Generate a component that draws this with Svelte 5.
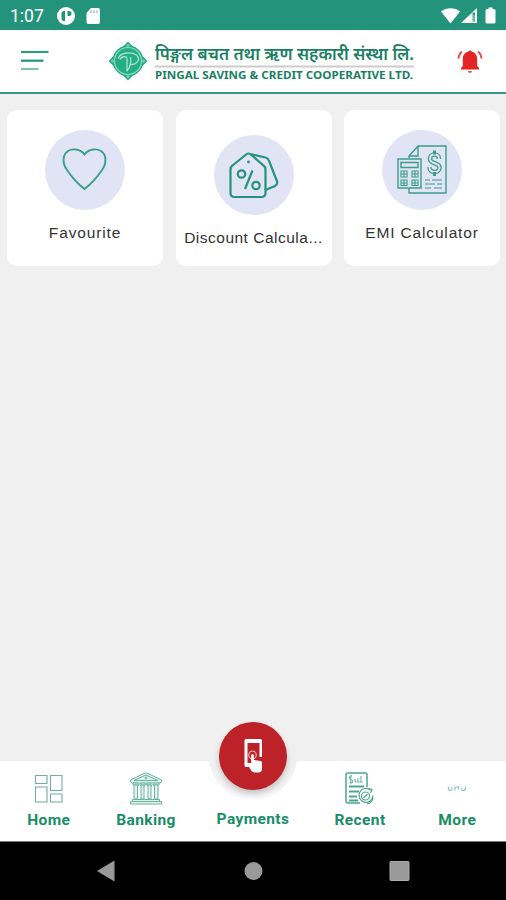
<script>
    const services = [
        { id: 'heart', label: 'Favourite' },
        { id: 'discount', label: 'Discount Calcula...' },
        { id: 'emi', label: 'EMI Calculator' }
    ];

    const tabs = [
        { id: 'home', label: 'Home' },
        { id: 'banking', label: 'Banking' },
        { id: 'payments', label: 'Payments' },
        { id: 'recent', label: 'Recent' },
        { id: 'more', label: 'More' }
    ];
</script>

<div class="screen">
    <div class="status">
        <span class="time">1:07</span>
        <svg class="notif" width="46" height="20" viewBox="0 0 46 20">
            <circle cx="9" cy="10" r="9" fill="#fff" />
            <path d="M8 5v10H7a2.500 2.500 0 0 1-2.500-2.500v-5A2.500 2.500 0 0 1 7 5zM10.500 5H12a2.500 2.500 0 0 1 2.500 2.500A2.500 2.500 0 0 1 12 10h-1.500z" fill="#24937b" />
            <path d="M34 2h7a2 2 0 0 1 2 2v12a2 2 0 0 1-2 2H31.500a2 2 0 0 1-2-2V7z" fill="#fff" />
            <path d="M34 4.500v2.500M37 4.500v2.500M40 4.500v2.500" stroke="#7dbfae" stroke-width="1.300" />
        </svg>
        <svg class="signal" width="60" height="20" viewBox="0 0 60 20">
            <path d="M1 5.500C6 1.200 15 1.200 20 5.500L10.500 17.500z" fill="#fff" />
            <path d="M37 2v15H21z" fill="#fff" />
            <path d="M33.800 6.500v9" stroke="#24937b" stroke-width="2.400" />
            <path d="M34 9v6" stroke="#b5dbd1" stroke-width="1" />
            <path d="M48.500 1.500h4v1.500h1.500a1.500 1.500 0 0 1 1.500 1.500v11.500a1.500 1.500 0 0 1-1.500 1.500h-7a1.500 1.500 0 0 1-1.500-1.500V4.500A1.500 1.500 0 0 1 47 3h1.500z" fill="#fff" />
        </svg>
    </div>

    <header>
        <svg class="menu" width="28" height="22" viewBox="0 0 28 22" fill="none" stroke-width="2.200">
            <path d="M0 2h27.500" stroke="#36987f" />
            <path d="M0 10.700h22.500" stroke="#24937b" />
            <path d="M0 19h17.500" stroke="#86bfae" />
        </svg>
        <div class="brand">
            <svg class="logo" width="40" height="40" viewBox="0 0 40 40">
                <path d="M20 0.500L24.500 5Q32 7.500 35 15.500L39.500 20L35 24.500Q32 32 24.500 35L20 39.500L15.500 35Q8 32 5 24.500L0.500 20L5 15.500Q8 7.500 15.500 5z" fill="#25ad83" />
                <circle cx="20" cy="20" r="13.500" fill="none" stroke="#8dd9be" stroke-width="1.200" />
                <path d="M20 2.500l2 2-2 2-2-2zM20 33.500l2 2-2 2-2-2zM4.500 18l2 2-2 2-2-2zM35.500 18l2 2-2 2-2-2z" fill="#74cbae" />
                <path d="M10.500 18c0-6 12-8 18-4 5 5-1 11-7 9M12.500 18.500c0-3 6-4 6.500-1v13M22.500 16c1 6 0 10-3.500 14" fill="none" stroke="#a5e3cc" stroke-width="1.300" />
            </svg>
            <svg class="name" width="262" height="44" viewBox="0 0 262 44">
                <text class="nepali" x="1" y="20.500" textLength="259" lengthAdjust="spacingAndGlyphs">पिङ्गल बचत तथा ऋण सहकारी संस्था लि.</text>
                <path d="M1 27.500h259" stroke="#cfcbcc" stroke-width="2" />
                <text class="english" x="1" y="39.800" textLength="258" lengthAdjust="spacingAndGlyphs">PINGAL SAVING &amp; CREDIT COOPERATIVE LTD.</text>
            </svg>
        </div>
        <svg class="bell" width="26" height="26" viewBox="0 0 26 26">
            <path d="M11.500 2.500a1.600 1.600 0 0 1 3 0c3.800.8 5.700 3.800 5.700 7.500v7l1.800 2v1.500H4V19l1.800-2v-7c0-3.700 1.900-6.700 5.700-7.500z" fill="#e32526" />
            <path d="M11 22h4a2 2 0 0 1-4 0z" fill="#ed5558" />
            <path d="M4.800 2.500Q2 5 1.300 9.500M21.200 2.500Q24 5 24.700 9.500" fill="none" stroke="#e5484a" stroke-width="1.900" />
        </svg>
    </header>

    <main>
        {#each services as service}
            <div class="card {service.id}">
                <div class="round">
                    {#if service.id === 'heart'}
                        <svg width="80" height="80" viewBox="0 0 80 80" fill="none" stroke="#36a18a" stroke-width="1.900">
                            <path d="M39.500 24.500C35 18.500 27 18.500 23 21c-6 4-5.500 13-1 19 4 6 11 14 17.500 19C46 54 53 46 57 40c4.500-6 5-15-1-19-4-2.500-12-2.500-16.500 3.500z" />
                        </svg>
                    {:else if service.id === 'discount'}
                        <svg width="80" height="80" viewBox="0 0 80 80" fill="none" stroke="#24937b" stroke-width="2.200" stroke-linejoin="round">
                            <path d="M34.500 18.500q-1.500 0-3 1.500L18.500 30.500q-2 1.500-2 4V58q0 4 4 4h27q4 0 4-4V34.500q0-2.500-2-4L37.500 20q-1.500-1.500-3-1.500z" />
                            <path d="M36 19l15.500 3.500q2.500.500 3.400 3l8 20.500q1.200 3.500-2 5L51.500 55" />
                            <circle cx="34.500" cy="27" r=".8" stroke-width="1.200" />
                            <circle cx="27.500" cy="39" r="3.700" />
                            <circle cx="42" cy="50.500" r="3.700" />
                            <path d="M38.500 35.500L31 54" />
                        </svg>
                    {:else}
                        <svg width="80" height="80" viewBox="0 0 80 80" fill="none" stroke="#3b9d8a" stroke-width="1.400">
                            <path d="M27 28v-2l9-10h28v47H27v-5M36 16v10h-9" />
                            <path d="M16 29h23v29H16z" />
                            <path d="M19 32.500h17v5H19z" />
                            <path d="M19 41h6v6h-6zM30 41h6v6h-6zM19 50h6v5.500h-6zM30 50h6v5.500h-6zM19 44h6M22 41v6M30 44h6M33 41v6M19 53h6M22 50v5.500M30 53h6M33 50v5.500" stroke-width="1.100" />
                            <path d="M57 29c0-3-2-4.500-4.500-4.500S48 26 48 29c0 5.500 9.500 3 9.500 8.500 0 2.500-2 4.500-5 4.500s-5-2-5-5" stroke-width="4.600" />
                            <path d="M57 29c0-3-2-4.500-4.500-4.500S48 26 48 29c0 5.500 9.500 3 9.500 8.500 0 2.500-2 4.500-5 4.500s-5-2-5-5" stroke="#e1e4f4" stroke-width="1.900" />
                            <path d="M52.500 20.500v4M52.500 42v4" stroke-width="3" />
                            <path d="M43 50h5M50 50h10M43 54h10M55 54h5M43 58h6M52 58h8" stroke-width="1.200" />
                        </svg>
                    {/if}
                </div>
                <span>{service.label}</span>
            </div>
        {/each}
    </main>

    <nav>
        {#each tabs as tab}
            <div class="tab {tab.id}">
                {#if tab.id === 'home'}
                    <svg width="34" height="34" viewBox="0 0 34 34" fill="none" stroke="#70b09d" stroke-width="1.100">
                        <path d="M3.500 4.500h11.500v8H3.500zM18.500 4.500H30v15H18.500zM3.500 16h11.500v15H3.500zM18.500 23H30v8H18.500z" />
                    </svg>
                {:else if tab.id === 'banking'}
                    <svg width="34" height="34" viewBox="0 0 34 34" fill="#e2f2ec" stroke="#69b49f" stroke-width="1">
                        <path d="M1.500 9L16 2h2l14.500 7v2l-2 1h-27l-2-1zM5 9.500l12-5.500 12 5.500z" />
                        <circle cx="17" cy="7" r="1" />
                        <path d="M4 12h5v2H4zM12 12h4v2h-4zM18 12h4v2h-4zM25 12h5v2h-5z" />
                        <path d="M5 14h3.500v14H5zM12 14h3v14h-3zM19 14h3v14h-3zM25.500 14H29v14h-3.500z" />
                        <path d="M8.500 15q1.700-3 3.500 0M15 15q2-3 4 0M22 15q1.700-3 3.500 0" fill="none" />
                        <path d="M3.500 28.500h27v2h-27zM1.500 30.500h31v2.500h-31z" />
                    </svg>
                {:else if tab.id === 'payments'}
                    <div class="notch">
                        <div class="fab">
                            <svg width="68" height="68" viewBox="0 0 68 68">
                                <path d="M27 17h14.500q1.500 0 1.500 1.500V35h-2.500V21h-12v20H34v4h-7q-1.500 0-1.500-1.500v-25q0-1.500 1.500-1.500z" fill="#fff" />
                                <circle cx="33.500" cy="33" r="3.800" fill="none" stroke="#e5a0a0" stroke-width="1.300" />
                                <path d="M32.200 33q1.300-2 2.600 0v5l7 1q1.200.500 1.200 2v5.500q0 4-3.500 4h-3.500q-3 0-4.500-3l-2.500-4.500q2-1.500 3.200.500z" fill="#fff" />
                            </svg>
                        </div>
                    </div>
                {:else if tab.id === 'recent'}
                    <svg width="34" height="34" viewBox="0 0 34 34" fill="none" stroke="#4fa48c" stroke-width="1.200">
                        <path d="M24 16V4q0-2-2-2H5Q3 2 3 4v26q0 2 2 2h12" stroke-width="1.500" />
                        <path d="M9 5q-3 0-2.500 2t2 2 1 2-3 .5M7.800 4v8M12 10.500V8M15 10.500V7M18 10.500V5M12 11h8" stroke="#7abba6" />
                        <path d="M6 15.500h15M6 20.500h10M6 25.500h8M6 29.500h9" stroke-width="2.200" />
                        <path d="M27.500 19a7 7 0 1 0 2.500 5.500M25 17.500l4 1-1.500 3.500" />
                        <circle cx="22.500" cy="25" r="4" />
                        <path d="M20.500 27l4-4M30 27q-1 5-6 6" />
                    </svg>
                {:else}
                    <svg width="34" height="34" viewBox="0 0 34 34" fill="none" stroke="#86c2ae" stroke-width="1.100">
                        <path d="M8.500 16.500q-.800 3 1.500 3 2.500 0 2-3M8.500 16.500l1-.800M15 19.500q-.5-3 1-3.500h2.500q-.5 1.500 0 2.500M22 19.500h2q2-1 1.500-3.500M22 19.500q-.800-1.500 0-2.500" />
                    </svg>
                {/if}
                <span>{tab.label}</span>
            </div>
        {/each}
    </nav>

    <div class="system">
        <svg width="506" height="58" viewBox="0 0 506 58">
            <path d="M114.500 18.500v21L97 29z" fill="#999" />
            <circle cx="253.500" cy="29" r="9" fill="#999" />
            <rect x="390" y="19.500" width="19" height="19" rx="1" fill="#999" stroke="#adadad" />
        </svg>
    </div>
</div>

<style>
    :global(body) {
        margin: 0;
    }

    .screen {
        width: 506px;
        height: 900px;
        display: flex;
        flex-direction: column;
        overflow: hidden;
        background: #f0f0f0;
    }

    svg {
        display: block;
    }

    .status {
        box-sizing: border-box;
        height: 30px;
        flex: none;
        display: flex;
        align-items: center;
        padding: 1px 6px 0 10px;
        background: #24937b;
        color: #fff;
    }

    .time {
        width: 47px;
        font: 17.500px Roboto, sans-serif;
    }

    .signal {
        margin-left: auto;
    }

    header {
        box-sizing: border-box;
        height: 64px;
        flex: none;
        display: flex;
        align-items: center;
        padding: 0 23px 0 21px;
        background: #fff;
        border-bottom: 2px solid #39957f;
    }

    .brand {
        display: flex;
        align-items: center;
        gap: 6px;
        margin: 0 0 1px 59px;
    }

    .name {
        overflow: visible;
    }

    .nepali {
        font: 600 18px "Noto Sans Devanagari", "Noto Sans", sans-serif;
        fill: #1b8063;
    }

    .english {
        font: 700 10.500px "Noto Sans", "Open Sans", sans-serif;
        fill: #1b8063;
    }

    .bell {
        margin: 2px 0 0 auto;
    }

    main {
        flex: 1;
        display: flex;
        align-items: flex-start;
        gap: 12.500px;
        padding: 16px 6px 0 7px;
    }

    .card {
        box-sizing: border-box;
        flex: 1;
        min-width: 0;
        height: 156px;
        display: flex;
        flex-direction: column;
        align-items: center;
        padding-top: 20px;
        border-radius: 10px;
        background: #fff;
    }

    .discount {
        padding-top: 25px;
    }

    .round {
        width: 80px;
        height: 80px;
        border-radius: 50%;
        background: #e1e4f4;
    }

    .card span {
        margin-top: 12px;
        font: 15.500px/22px "Liberation Sans", sans-serif;
        letter-spacing: 0.850px;
        white-space: nowrap;
        color: #333;
    }

    .discount span {
        letter-spacing: 0.500px;
    }

    nav {
        height: 80px;
        flex: none;
        display: flex;
        background: #fff;
        border-bottom: 1px solid #777;
    }

    .tab {
        width: 97px;
        padding-top: 10px;
        display: flex;
        flex-direction: column;
        align-items: center;
    }

    .home,
    .more {
        width: 97.500px;
    }

    .payments {
        width: 117px;
        padding-top: 0;
    }

    .tab span {
        margin-top: 5px;
        font: 700 15.500px/20px Roboto, sans-serif;
        letter-spacing: 0.400px;
        color: #188d67;
    }

    .notch {
        width: 88px;
        height: 88px;
        flex: none;
        margin-top: -49px;
        display: flex;
        align-items: center;
        justify-content: center;
        border-radius: 50%;
        background: linear-gradient(#f0f0f0 55%, #f4f4f4 88%, #fdfdfd);
    }

    .fab {
        width: 68px;
        height: 68px;
        border-radius: 50%;
        background: #bd2229;
        box-shadow: 0 4px 6px rgba(0, 0, 0, 0.200);
    }

    .payments span {
        margin-top: 9px;
    }

    .system {
        height: 58px;
        flex: none;
        background: #000;
    }
</style>
